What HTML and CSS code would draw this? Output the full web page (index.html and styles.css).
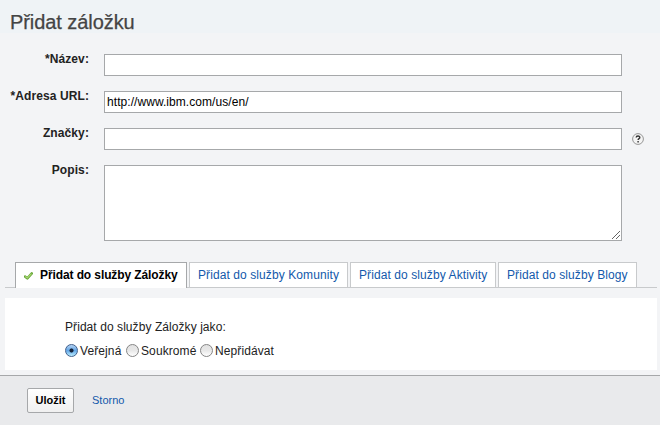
FILE: index.html
```
<!DOCTYPE html>
<html lang="cs">
<head>
<meta charset="utf-8">
<title>Přidat záložku</title>
<link rel="stylesheet" href="styles.css">
</head>
<body>
<form class="dialog">
  <header class="header"><h1>Přidat záložku</h1></header>
  <div class="fields">
    <label class="label" for="name">*Název:</label>
    <input class="field" id="name" type="text">
    <span></span>
    <label class="label" for="url">*Adresa URL:</label>
    <input class="field" id="url" type="text" value="http://www.ibm.com/us/en/">
    <span></span>
    <label class="label" for="tags">Značky:</label>
    <input class="field" id="tags" type="text">
    <svg class="help" viewBox="0 0 12 12"><circle cx="6" cy="6" r="5.4" fill="#f4f4f4" stroke="#969696"/><path d="M4.2 4.6c0-2 3.6-2.1 3.6-.2 0 1.2-1.7 1.2-1.7 2.6M6.1 8v1.4" fill="none" stroke="#333" stroke-width="1.4"/></svg>
    <label class="label" for="desc">Popis:</label>
    <div class="area">
      <textarea class="field" id="desc"></textarea>
      <svg class="grip" viewBox="0 0 8 8" shape-rendering="crispEdges"><path d="M0 7h1v1H0zM1 6h1v1H1zM2 5h1v1H2zM3 4h1v1H3zM4 3h1v1H4zM5 2h1v1H5zM6 1h1v1H6zM7 0h1v1H7zM4 7h1v1H4zM5 6h1v1H5zM6 5h1v1H6zM7 4h1v1H7z" fill="#666"/></svg>
    </div>
  </div>
  <nav class="tabs">
    <a class="tab active"><svg class="check" viewBox="0 0 9 8"><path d="M1 4.5 3.3 6.4 7.8 1.4" fill="none" stroke="#67a536" stroke-width="2.5" stroke-linejoin="round" stroke-linecap="round"/><path d="M1.2 4.4 3.3 6 7.5 1.6" fill="none" stroke="#a5d671" stroke-width="1.3"/></svg><span>Přidat do služby Záložky</span></a>
    <a class="tab communities"><span>Přidat do služby Komunity</span></a>
    <a class="tab activities"><span>Přidat do služby Aktivity</span></a>
    <a class="tab blogs"><span>Přidat do služby Blogy</span></a>
  </nav>
  <section class="panel">
    <p>Přidat do služby Záložky jako:</p>
    <div class="options">
      <label class="option public"><input type="radio" name="access" checked><span>Veřejná</span></label>
      <label class="option private"><input type="radio" name="access"><span>Soukromé</span></label>
      <label class="option"><input type="radio" name="access"><span>Nepřidávat</span></label>
    </div>
  </section>
  <footer class="footer">
    <button class="save" type="button">Uložit</button>
    <a class="cancel">Storno</a>
  </footer>
</form>
</body>
</html>
```
FILE: styles.css
```
* { box-sizing: border-box; }
body {
  margin: 0;
  background: #f3f4f6;
  color: #222;
  font: 12px/14px "Liberation Sans", Arial, sans-serif;
}
.dialog {
  display: flex;
  flex-direction: column;
  height: 425px;
  overflow: hidden;
}
.header {
  height: 33px;
  padding: 10px 0 0 10px;
  background: #eff3f6;
}
h1 {
  margin: 0;
  font-size: 20px;
  line-height: 24px;
  font-weight: normal;
  letter-spacing: -0.07px;
  color: #444;
  -webkit-text-stroke: 0.25px #444;
}
.fields {
  display: grid;
  grid-template-columns: 89px 533px 22px;
  grid-template-rows: 22px 22px 22px 76px;
  row-gap: 15px;
  margin-top: 21px;
}
.fields > :nth-child(3n + 2) { margin-left: 15px; }
.label {
  margin-top: -2px;
  text-align: right;
  font-weight: bold;
  letter-spacing: 0.1px;
}
.field {
  display: block;
  width: 518px;
  height: 22px;
  padding: 0 2px;
  border: 1px solid #a6a8aa;
  border-radius: 0;
  outline: none;
  background: #fff;
  color: #000;
  font: inherit;
  letter-spacing: 0.06px;
}
.help {
  width: 12px;
  height: 12px;
  margin: 5px 0 0 10px;
}
.area { position: relative; width: 518px; }
textarea.field { height: 76px; resize: none; }
.grip {
  position: absolute;
  right: 2px;
  bottom: 2px;
  width: 8px;
  height: 8px;
}
.tabs {
  display: flex;
  gap: 2px;
  height: 26px;
  margin: 21px 3px 0 5px;
  padding-left: 10px;
  background: linear-gradient(#c8cacc, #c8cacc) 0 25px / 100% 1px no-repeat;
}
.tab {
  height: 26px;
  padding: 5px 0 0 8px;
  border: 1px solid #c8cacc;
  background: #fff;
  color: #1259ab;
  letter-spacing: 0.09px;
  white-space: nowrap;
}
.tab.active {
  display: flex;
  width: 172px;
  border-color: #a6a8aa;
  border-bottom: 0;
  color: #000;
  font-weight: bold;
  letter-spacing: -0.1px;
}
.check {
  width: 9px;
  height: 8px;
  margin: 4px 7px 0 0;
}
.communities { width: 159px; }
.activities { width: 146px; }
.blogs { width: 139px; }
.panel {
  height: 72px;
  margin: 10px 3px 0 5px;
  padding: 22px 0 0 60px;
  background: #fff;
}
p { margin: 0; letter-spacing: 0.07px; }
.options { display: flex; margin-top: 10px; letter-spacing: 0.1px; }
.option { display: flex; }
.public { width: 61px; }
.private { width: 74px; }
.option input {
  appearance: none;
  width: 13px;
  height: 13px;
  margin: 0 2px 0 0;
  border: 1px solid #858585;
  border-radius: 50%;
  background: linear-gradient(#e2e2e2, #e8e8e8 50%, #fff);
}
.option input:checked {
  border-color: #42608c;
  background: radial-gradient(circle, #14233b 0 1.7px, transparent 2.4px), linear-gradient(#b5d3f3, #62a5e5 50%, #b9edff);
}
.footer {
  display: flex;
  flex: 1;
  align-items: flex-start;
  margin-top: 5px;
  padding: 12px 0 0 27px;
  border-top: 1px solid #a6a8aa;
  background: #e9eaec;
}
.save {
  width: 47px;
  height: 25px;
  padding: 0 0 2px;
  border: 1px solid #a6a8aa;
  border-radius: 2px;
  background: linear-gradient(#fff, #f0f0f0);
  color: #000;
  font: bold 11px/14px "Liberation Sans", Arial, sans-serif;
}
.cancel {
  margin: 5px 0 0 18px;
  color: #1259ab;
  font-size: 11px;
}
```
